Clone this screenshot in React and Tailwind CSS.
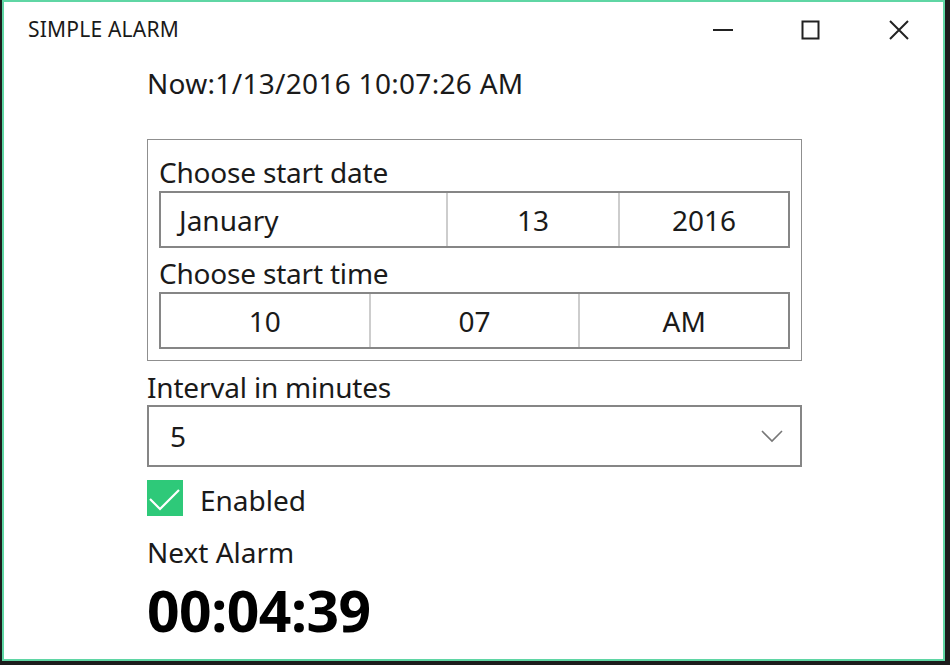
import React from 'react';

const font = { fontFamily: '"Noto Sans", "Open Sans", sans-serif' };

function TitleBar() {
  return (
    <div className="h-[56px] flex items-center justify-between">
      <span className="pl-[24px] text-[21px] text-[#1a1a1a] tracking-[0.2px]">SIMPLE ALARM</span>
      <div className="flex items-center h-full">
        {/* minimize */}
        <div className="w-[88px] h-full flex items-center justify-center">
          <svg width="22" height="4" viewBox="0 0 22 4"><line x1="1" y1="2" x2="21" y2="2" stroke="#222" strokeWidth="2" /></svg>
        </div>
        {/* maximize */}
        <div className="w-[88px] h-full flex items-center justify-center">
          <svg width="20" height="20" viewBox="0 0 20 20"><rect x="1.5" y="1.5" width="16" height="17" fill="none" stroke="#222" strokeWidth="2" /></svg>
        </div>
        {/* close */}
        <div className="w-[88px] h-full flex items-center justify-center">
          <svg width="20" height="20" viewBox="0 0 20 20"><path d="M1 1 L19 19 M19 1 L1 19" stroke="#222" strokeWidth="2" /></svg>
        </div>
      </div>
    </div>
  );
}

function Picker({ cells }) {
  return (
    <div className="h-[57px] flex border-2 border-[#868686] bg-white">
      {cells.map((c, i) => (
        <div
          key={i}
          className={`${c.w} h-full flex items-center ${c.left ? 'justify-start pl-[18px]' : 'justify-center'} ${i > 0 ? 'border-l-2 border-[#cdcdcd]' : ''}`}
        >
          {c.text}
        </div>
      ))}
    </div>
  );
}

export default function App() {
  return (
    <div className="w-[950px] h-[665px] bg-[#1c1c1c] pl-[2px] pr-[5px] pb-[4px]" style={font}>
      <div className="h-full bg-white border-t-2 border-l-2 border-r-2 border-b-2 border-[#5fd6a4] flex flex-col">
        <TitleBar />
        <div className="pl-[143px] w-[798px] flex flex-col text-[28px] text-[#1a1a1a]">
          <div className="leading-[34px] mt-[8px] tracking-[0.3px]">Now:1/13/2016 10:07:26 AM</div>

          {/* start date / time group */}
          <div className="mt-[39px] border border-[#8f8f8f] h-[222px] px-[11px] pt-[16px]">
            <div className="leading-[32px] tracking-[-0.2px]">Choose start date</div>
            <div className="mt-[3px]">
              <Picker
                cells={[
                  { text: 'January', w: 'w-[285px]', left: true },
                  { text: '13', w: 'w-[172px]' },
                  { text: '2016', w: 'flex-1' },
                ]}
              />
            </div>
            <div className="leading-[32px] mt-[9px] tracking-[-0.2px]">Choose start time</div>
            <div className="mt-[3px]">
              <Picker
                cells={[
                  { text: '10', w: 'flex-1' },
                  { text: '07', w: 'flex-1' },
                  { text: 'AM', w: 'flex-1' },
                ]}
              />
            </div>
          </div>

          <div className="leading-[32px] mt-[10px] tracking-[-0.2px]">Interval in minutes</div>
          <div className="mt-[2px] h-[62px] border-2 border-[#868686] flex items-center justify-between pl-[21px] pr-[16px]">
            <span>5</span>
            <svg width="24" height="14" viewBox="0 0 24 14">
              <polyline points="2,2 12,12 22,2" fill="none" stroke="#777" strokeWidth="1.6" />
            </svg>
          </div>

          <div className="mt-[13px] flex items-center gap-[17px] h-[36px]">
            <div className="w-[36px] h-[36px] bg-[#2ec979] flex items-center justify-center">
              <svg width="36" height="36" viewBox="0 0 36 36">
                <polyline points="3,19 13,29 32,10" fill="none" stroke="#fff" strokeWidth="2.2" />
              </svg>
            </div>
            <span className="leading-[32px] pt-[3px]">Enabled</span>
          </div>

          <div className="leading-[32px] mt-[20px]">Next Alarm</div>
          <div className="leading-[56px] mt-[14px] text-[57px] font-bold text-black tracking-[-0.5px]">00:04:39</div>
        </div>
      </div>
    </div>
  );
}
